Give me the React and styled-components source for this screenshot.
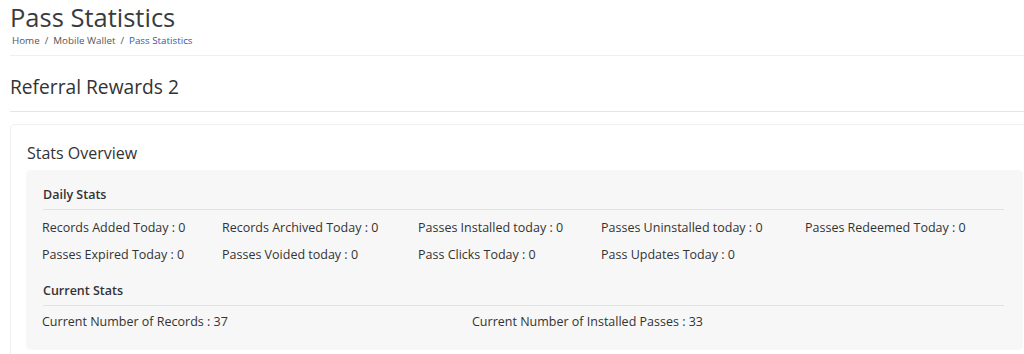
import React from "react";
import styled, { createGlobalStyle } from "styled-components";

const Global = createGlobalStyle`
  html, body { margin: 0; padding: 0; background: #fff; overflow: hidden; }
  body { font-family: "Open Sans", "Noto Sans", sans-serif; color: #333; }
`;

const Page = styled.div`
  padding: 0 0 0 10px;
  width: 1014px;
`;

const Header = styled.header`
  border-bottom: 1px solid #eeeeee;
  padding-bottom: 7px;
`;

const Title = styled.h1`
  margin: 0;
  font-size: 25.5px;
  font-weight: 400;
  line-height: 34px;
  color: #3b3b3b;
`;

const Crumbs = styled.nav`
  display: flex;
  gap: 5px;
  font-size: 9.8px;
  line-height: 14px;
  color: #555;
  padding-left: 2px;
`;

const Crumb = styled.span`
  color: ${(p) => (p.$active ? "#3657a8" : "#555")};
`;

const Section = styled.div`
  border-bottom: 1px solid #e6e6e6;
  padding: 19px 0 12px;
`;

const SectionTitle = styled.h2`
  margin: 0;
  font-size: 19.2px;
  font-weight: 400;
  line-height: 24px;
  color: #333;
`;

const Card = styled.div`
  margin-top: 12px;
  width: 1031px;
  box-sizing: border-box;
  border: 1px solid #f1f1f1;
  border-radius: 5px;
  padding: 16px 17px 17px 15px;
`;

const CardTitle = styled.h3`
  margin: 0 0 5px 1px;
  font-size: 16px;
  font-weight: 400;
  line-height: 24px;
  color: #333;
`;

const Well = styled.div`
  background: #f7f7f7;
  border-radius: 5px;
  padding: 16px 19px 19px 16px;
`;

const GroupTitle = styled.div`
  font-size: 12.5px;
  font-weight: 600;
  line-height: 18px;
  color: #333;
  padding-bottom: 5px;
  border-bottom: 1px solid #e2e2e2;
  margin-left: 1px;
`;

const StatsGrid = styled.div`
  display: grid;
  grid-template-columns: ${(p) => p.$cols};
  row-gap: 9px;
  padding-top: ${(p) => p.$pt}px;
  margin-bottom: ${(p) => p.$mb || 0}px;
`;

const Stat = styled.div`
  font-size: 12.5px;
  line-height: 18px;
  color: #333;
  white-space: nowrap;
`;

const daily = [
  "Records Added Today : 0",
  "Records Archived Today : 0",
  "Passes Installed today : 0",
  "Passes Uninstalled today : 0",
  "Passes Redeemed Today : 0",
  "Passes Expired Today : 0",
  "Passes Voided today : 0",
  "Pass Clicks Today : 0",
  "Pass Updates Today : 0",
];

const current = [
  "Current Number of Records : 37",
  "Current Number of Installed Passes : 33",
];

export default function App() {
  return (
    <Page>
      <Global />
      <Header>
        <Title>Pass Statistics</Title>
        <Crumbs>
          <Crumb>Home</Crumb>
          <Crumb>/</Crumb>
          <Crumb>Mobile Wallet</Crumb>
          <Crumb>/</Crumb>
          <Crumb $active>Pass Statistics</Crumb>
        </Crumbs>
      </Header>
      <Section>
        <SectionTitle>Referral Rewards 2</SectionTitle>
      </Section>
      <Card>
        <CardTitle>Stats Overview</CardTitle>
        <Well>
          <GroupTitle>Daily Stats</GroupTitle>
          <StatsGrid $cols="180px 196px 183px 204px 1fr" $pt={9} $mb={18}>
            {daily.map((d) => (
              <Stat key={d}>{d}</Stat>
            ))}
          </StatsGrid>
          <GroupTitle>Current Stats</GroupTitle>
          <StatsGrid $cols="430px 1fr" $pt={7}>
            {current.map((d) => (
              <Stat key={d}>{d}</Stat>
            ))}
          </StatsGrid>
        </Well>
      </Card>
    </Page>
  );
}
